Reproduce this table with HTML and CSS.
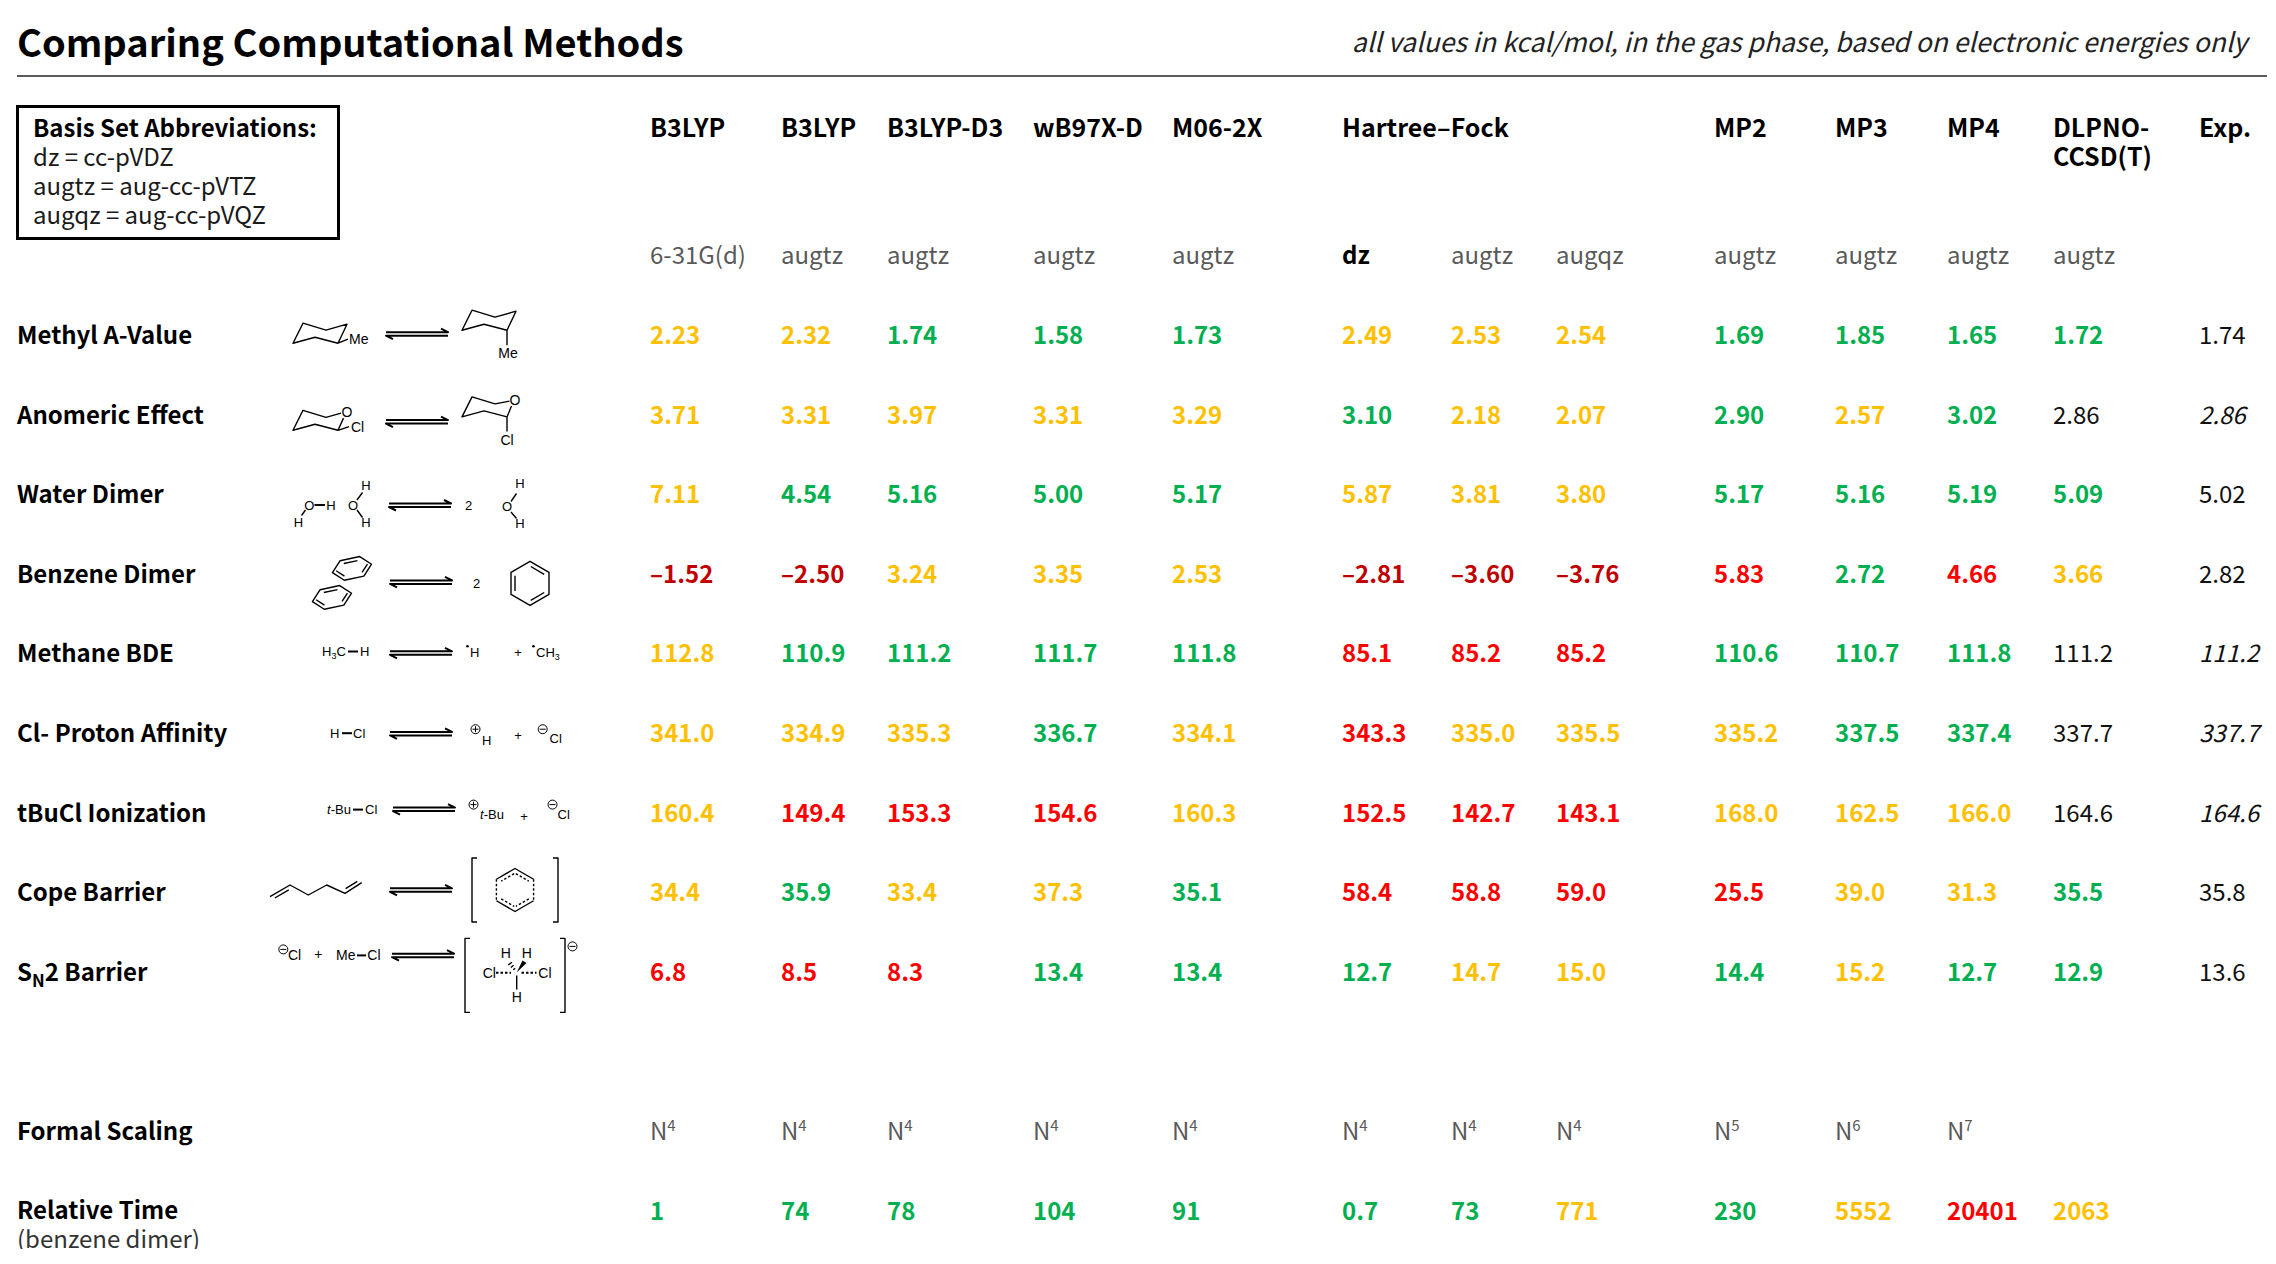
FILE: index.html
```html
<!DOCTYPE html>
<html lang="en">
<head>
<meta charset="utf-8">
<title>Comparing Computational Methods</title>
<link rel="stylesheet" href="styles.css">
</head>
<body>
<div class="page">
  <header class="top">
    <h1 class="title">Comparing Computational Methods</h1>
    <p class="note">all values in kcal/mol, in the gas phase, based on electronic energies only</p>
  </header>

  <div class="table">
    <div class="basis">
      <div class="basis-title">Basis Set Abbreviations:</div>
      <div>dz = cc-pVDZ</div>
      <div>augtz = aug-cc-pVTZ</div>
      <div>augqz = aug-cc-pVQZ</div>
    </div>

    <div class="h">B3LYP</div>
    <div class="h">B3LYP</div>
    <div class="h">B3LYP-D3</div>
    <div class="h">wB97X-D</div>
    <div class="h">M06-2X</div>
    <div class="h span3">Hartree–Fock</div>
    <div class="h">MP2</div>
    <div class="h">MP3</div>
    <div class="h">MP4</div>
    <div class="h">DLPNO-<br>CCSD(T)</div>
    <div class="h">Exp.</div>

    <div class="s">6-31G(d)</div>
    <div class="s">augtz</div>
    <div class="s">augtz</div>
    <div class="s">augtz</div>
    <div class="s">augtz</div>
    <div class="s sb">dz</div>
    <div class="s">augtz</div>
    <div class="s">augqz</div>
    <div class="s">augtz</div>
    <div class="s">augtz</div>
    <div class="s">augtz</div>
    <div class="s">augtz</div>
    <div class="s"></div>

    <!-- Methyl A-Value -->
    <div class="lbl">Methyl A-Value</div>
    <div class="mol"><svg viewBox="260 293.8 390 80" width="390" height="80">
      <path d="M293,343 L303,323 L326,330 L347,324 L338,343 L315,337 Z M338,343 L348,339"/>
      <text x="349" y="344">Me</text>
      <path class="eq" transform="translate(386,332)" d="M0,0 H62 L55,-3.5 M62,3.5 H0 L7,7"/>
      <path d="M462,330 L472,310 L495,317 L516,311 L507,330 L484,324 Z M507,330 V345"/>
      <text x="508" y="358" text-anchor="middle">Me</text>
    </svg></div>
    <div class="v a">2.23</div><div class="v a">2.32</div><div class="v g">1.74</div><div class="v g">1.58</div><div class="v g">1.73</div>
    <div class="v a">2.49</div><div class="v a">2.53</div><div class="v a">2.54</div>
    <div class="v g">1.69</div><div class="v g">1.85</div><div class="v g">1.65</div><div class="v g">1.72</div>
    <div class="v k">1.74</div>

    <!-- Anomeric Effect -->
    <div class="lbl">Anomeric Effect</div>
    <div class="mol"><svg viewBox="260 373.4 390 80" width="390" height="80">
      <path d="M341,413.5 L326,417.7 L303,410.7 L293,430.7 L315,424.7 L338,430.7 L343.5,418.5 M338,430.7 L349,427"/>
      <text x="347" y="417.5" text-anchor="middle">O</text>
      <text x="351" y="432">Cl</text>
      <path class="eq" transform="translate(386,420.5)" d="M0,0 H62 L55,-3.5 M62,3.5 H0 L7,7"/>
      <path d="M509.5,401.5 L495,404.3 L472,397.3 L462,417.3 L484,411.3 L507,417.3 L511.5,406.5 M507,417.3 V432"/>
      <text x="515" y="405.5" text-anchor="middle">O</text>
      <text x="507" y="445" text-anchor="middle">Cl</text>
    </svg></div>
    <div class="v a">3.71</div><div class="v a">3.31</div><div class="v a">3.97</div><div class="v a">3.31</div><div class="v a">3.29</div>
    <div class="v g">3.10</div><div class="v a">2.18</div><div class="v a">2.07</div>
    <div class="v g">2.90</div><div class="v a">2.57</div><div class="v g">3.02</div><div class="v k">2.86</div>
    <div class="v k ki">2.86</div>

    <!-- Water Dimer -->
    <div class="lbl">Water Dimer</div>
    <div class="mol"><svg viewBox="260 453 390 80" width="390" height="80">
      <text class="sm" x="309.3" y="509.7" text-anchor="middle">O</text>
      <path class="bd" d="M314.5,505 H325"/>
      <text class="sm" x="331" y="509.7" text-anchor="middle">H</text>
      <path d="M305.5,510 L301.5,515.5"/>
      <text class="sm" x="298.5" y="527.2" text-anchor="middle">H</text>
      <text class="sm" x="366" y="489.7" text-anchor="middle">H</text>
      <path d="M357,500 L362.5,492.5 M357,510 L362.5,517.5"/>
      <text class="sm" x="353" y="509.7" text-anchor="middle">O</text>
      <text class="sm" x="366" y="527.2" text-anchor="middle">H</text>
      <path class="eq" transform="translate(389,503.5)" d="M0,0 H62 L55,-3.5 M62,3.5 H0 L7,7"/>
      <text class="sm" x="468.6" y="509.7" text-anchor="middle">2</text>
      <text class="sm" x="520" y="487.7" text-anchor="middle">H</text>
      <path d="M511,501.5 L516.5,493.5 M511,512 L516.5,518.5"/>
      <text class="sm" x="507" y="511.4" text-anchor="middle">O</text>
      <text class="sm" x="520" y="527.7" text-anchor="middle">H</text>
    </svg></div>
    <div class="v a">7.11</div><div class="v g">4.54</div><div class="v g">5.16</div><div class="v g">5.00</div><div class="v g">5.17</div>
    <div class="v a">5.87</div><div class="v a">3.81</div><div class="v a">3.80</div>
    <div class="v g">5.17</div><div class="v g">5.16</div><div class="v g">5.19</div><div class="v g">5.09</div>
    <div class="v k">5.02</div>

    <!-- Benzene Dimer -->
    <div class="lbl">Benzene Dimer</div>
    <div class="mol"><svg viewBox="260 532.6 390 80" width="390" height="80">
      <g transform="translate(352,568) rotate(-12)">
        <path d="M20,0 L10,-10 L-10,-10 L-20,0 L-10,10 L10,10 Z M-7,-6.5 H7 M-16,-1 L-9,6 M16,-1 L9,6"/>
      </g>
      <g transform="translate(332,597) rotate(-12)">
        <path d="M20,0 L10,-10 L-10,-10 L-20,0 L-10,10 L10,10 Z M-7,-6.5 H7 M-16,-1 L-9,6 M16,-1 L9,6"/>
      </g>
      <path class="eq" transform="translate(390,580)" d="M0,0 H62 L55,-3.5 M62,3.5 H0 L7,7"/>
      <text class="sm" x="476.5" y="588" text-anchor="middle">2</text>
      <path d="M530,561 L549,572 L549,594 L530,605 L511,594 L511,572 Z M515,575.3 V590.7 M530.8,566.1 L544.2,573.9 M544.2,592.1 L530.8,599.9"/>
    </svg></div>
    <div class="v dr">–1.52</div><div class="v dr">–2.50</div><div class="v a">3.24</div><div class="v a">3.35</div><div class="v a">2.53</div>
    <div class="v dr">–2.81</div><div class="v dr">–3.60</div><div class="v dr">–3.76</div>
    <div class="v r">5.83</div><div class="v g">2.72</div><div class="v r">4.66</div><div class="v a">3.66</div>
    <div class="v k">2.82</div>

    <!-- Methane BDE -->
    <div class="lbl">Methane BDE</div>
    <div class="mol"><svg viewBox="260 612.2 390 80" width="390" height="80">
      <text class="sm" x="322" y="656.5">H<tspan class="sub" dy="3">3</tspan><tspan dy="-3">C</tspan></text>
      <path class="bd" d="M348,651.7 H358"/>
      <text class="sm" x="360" y="656.5">H</text>
      <path class="eq" transform="translate(390,651.5)" d="M0,0 H62 L55,-3.5 M62,3.5 H0 L7,7"/>
      <circle class="dot" cx="467.5" cy="646.5" r="1.3"/>
      <text class="sm" x="470" y="657.5">H</text>
      <text class="sm" x="518" y="657.5" text-anchor="middle">+</text>
      <circle class="dot" cx="533.5" cy="646.5" r="1.3"/>
      <text class="sm" x="536" y="657.5">CH<tspan class="sub" dy="3">3</tspan></text>
    </svg></div>
    <div class="v a">112.8</div><div class="v g">110.9</div><div class="v g">111.2</div><div class="v g">111.7</div><div class="v g">111.8</div>
    <div class="v r">85.1</div><div class="v r">85.2</div><div class="v r">85.2</div>
    <div class="v g">110.6</div><div class="v g">110.7</div><div class="v g">111.8</div><div class="v k">111.2</div>
    <div class="v k ki">111.2</div>

    <!-- Cl- Proton Affinity -->
    <div class="lbl">Cl- Proton Affinity</div>
    <div class="mol"><svg viewBox="260 691.8 390 80" width="390" height="80">
      <text class="sm" x="330" y="737.7">H</text>
      <path class="bd" d="M342,733 H352"/>
      <text class="sm" x="353" y="737.7">Cl</text>
      <path class="eq" transform="translate(390,731.7)" d="M0,0 H62 L55,-3.5 M62,3.5 H0 L7,7"/>
      <circle class="chg" cx="475.5" cy="729" r="4.5"/>
      <path class="thin" d="M472.5,729 H478.5 M475.5,726 V732"/>
      <text class="sm" x="482" y="744.7">H</text>
      <text class="sm" x="518" y="739.7" text-anchor="middle">+</text>
      <circle class="chg" cx="542.7" cy="729" r="4.5"/>
      <path class="thin" d="M539.7,729 H545.7"/>
      <text class="sm" x="549.6" y="742.7">Cl</text>
    </svg></div>
    <div class="v a">341.0</div><div class="v a">334.9</div><div class="v a">335.3</div><div class="v g">336.7</div><div class="v a">334.1</div>
    <div class="v r">343.3</div><div class="v a">335.0</div><div class="v a">335.5</div>
    <div class="v a">335.2</div><div class="v g">337.5</div><div class="v g">337.4</div><div class="v k">337.7</div>
    <div class="v k ki">337.7</div>

    <!-- tBuCl Ionization -->
    <div class="lbl">tBuCl Ionization</div>
    <div class="mol"><svg viewBox="260 771.4 390 80" width="390" height="80">
      <text class="sm" x="327" y="814.7"><tspan font-style="italic">t</tspan>-Bu</text>
      <path class="bd" d="M353,810 H363"/>
      <text class="sm" x="365" y="814.7">Cl</text>
      <path class="eq" transform="translate(393,808)" d="M0,0 H62 L55,-3.5 M62,3.5 H0 L7,7"/>
      <circle class="chg" cx="473.5" cy="805" r="4.5"/>
      <path class="thin" d="M470.5,805 H476.5 M473.5,802 V808"/>
      <text class="sm" x="480" y="819.5"><tspan font-style="italic">t</tspan>-Bu</text>
      <text class="sm" x="524" y="821" text-anchor="middle">+</text>
      <circle class="chg" cx="552.5" cy="805" r="4.5"/>
      <path class="thin" d="M549.5,805 H555.5"/>
      <text class="sm" x="557.5" y="819.5">Cl</text>
    </svg></div>
    <div class="v a">160.4</div><div class="v r">149.4</div><div class="v r">153.3</div><div class="v r">154.6</div><div class="v a">160.3</div>
    <div class="v r">152.5</div><div class="v r">142.7</div><div class="v r">143.1</div>
    <div class="v a">168.0</div><div class="v a">162.5</div><div class="v a">166.0</div><div class="v k">164.6</div>
    <div class="v k ki">164.6</div>

    <!-- Cope Barrier -->
    <div class="lbl">Cope Barrier</div>
    <div class="mol"><svg viewBox="260 851 390 80" width="390" height="80">
      <path d="M270,896.7 L290,885 L308.3,895 L326.7,885 L345,893.3 L361.7,882.7 M274.8,898 L288.8,889.8 M345.6,888.7 L357.3,881.3"/>
      <path class="eq" transform="translate(390,888.3)" d="M0,0 H62 L55,-3.5 M62,3.5 H0 L7,7"/>
      <path d="M477,858 H472 V922 H477 M553,858 H558 V922 H553"/>
      <path d="M496.4,879.25 L515,868.5 L533.6,879.25 M496.4,900.75 L515,911.5 L533.6,900.75"/>
      <path class="dash" d="M496.4,879.25 V900.75 M533.6,879.25 V900.75 M515.8,873.6 L528.8,881.1 M514.2,873.6 L501.2,881.1 M528.8,898.9 L515.8,906.4 M501.2,898.9 L514.2,906.4"/>
    </svg></div>
    <div class="v a">34.4</div><div class="v g">35.9</div><div class="v a">33.4</div><div class="v a">37.3</div><div class="v g">35.1</div>
    <div class="v r">58.4</div><div class="v r">58.8</div><div class="v r">59.0</div>
    <div class="v r">25.5</div><div class="v a">39.0</div><div class="v a">31.3</div><div class="v g">35.5</div>
    <div class="v k">35.8</div>

    <!-- SN2 Barrier -->
    <div class="lbl">S<span class="subn">N</span>2 Barrier</div>
    <div class="mol"><svg viewBox="260 930.6 390 80" width="390" height="80">
      <circle class="chg" cx="283.3" cy="949" r="4.5"/>
      <path class="thin" d="M280.3,949 H286.3"/>
      <text x="288" y="960">Cl</text>
      <text x="318.3" y="959" text-anchor="middle">+</text>
      <text x="336" y="960">Me</text>
      <path class="bd" d="M357,955 H366"/>
      <text x="367.3" y="960">Cl</text>
      <path class="eq" transform="translate(392,953.3)" d="M0,0 H62 L55,-3.5 M62,3.5 H0 L7,7"/>
      <path d="M470,938 H465 V1012 H470 M560,938 H565 V1012 H560"/>
      <circle class="chg" cx="572.5" cy="946" r="4.5"/>
      <path class="thin" d="M569.5,946 H575.5"/>
      <text x="505.8" y="958" text-anchor="middle">H</text>
      <text x="526.7" y="958" text-anchor="middle">H</text>
      <text x="482.7" y="977.3">Cl</text>
      <text x="538.3" y="977.3">Cl</text>
      <text x="516.7" y="1001.7" text-anchor="middle">H</text>
      <path class="dash bd" d="M496,972.3 H511 M521.5,972.3 H536.5"/>
      <path d="M516.7,975 V989 M513.2,969.4 L515.2,968 M510.8,967.1 L513.6,964.9 M508.2,964.6 L512,961.8"/>
      <polygon class="wedge" points="516.7,972 522.5,960 526.5,962.5"/>
    </svg></div>
    <div class="v r">6.8</div><div class="v r">8.5</div><div class="v r">8.3</div><div class="v g">13.4</div><div class="v g">13.4</div>
    <div class="v g">12.7</div><div class="v a">14.7</div><div class="v a">15.0</div>
    <div class="v g">14.4</div><div class="v a">15.2</div><div class="v g">12.7</div><div class="v g">12.9</div>
    <div class="v k">13.6</div>

    <div class="spacer"></div>

    <!-- Formal Scaling -->
    <div class="lbl">Formal Scaling</div>
    <div></div>
    <div class="n">N<span class="sup">4</span></div>
    <div class="n">N<span class="sup">4</span></div>
    <div class="n">N<span class="sup">4</span></div>
    <div class="n">N<span class="sup">4</span></div>
    <div class="n">N<span class="sup">4</span></div>
    <div class="n">N<span class="sup">4</span></div>
    <div class="n">N<span class="sup">4</span></div>
    <div class="n">N<span class="sup">4</span></div>
    <div class="n">N<span class="sup">5</span></div>
    <div class="n">N<span class="sup">6</span></div>
    <div class="n">N<span class="sup">7</span></div>
    <div></div>
    <div></div>

    <!-- Relative Time -->
    <div class="lbl rel">Relative Time<span class="rel-sub">(benzene dimer)</span></div>
    <div></div>
    <div class="v g">1</div><div class="v g">74</div><div class="v g">78</div><div class="v g">104</div><div class="v g">91</div>
    <div class="v g">0.7</div><div class="v g">73</div><div class="v a">771</div>
    <div class="v g">230</div><div class="v a">5552</div><div class="v r">20401</div><div class="v a">2063</div>
    <div></div>
  </div>
</div>
</body>
</html>
```

FILE: styles.css
```css
html, body {
  margin: 0;
  padding: 0;
  background: #ffffff;
}

body {
  font-family: "Noto Sans CJK JP", "Noto Sans", sans-serif;
  color: #000000;
}

.page {
  padding: 0 9px 0 17px;
}

/* ---------- top heading ---------- */
.top {
  display: flex;
  justify-content: space-between;
  align-items: center;
  height: 77px;
  box-sizing: border-box;
  padding: 12px 20px 6px 0;
  border-bottom: 2px solid #595959;
}

.title {
  margin: 0;
  font-size: 38px;
  font-weight: 700;
  line-height: 1.2;
}

.note {
  margin: 0;
  font-size: 26.5px;
  font-style: italic;
  color: #222222;
  line-height: 1.2;
}

/* ---------- the table ---------- */
.table {
  display: grid;
  grid-template-columns: 243px 390px 131px 106px 146px 139px 170px 109px 105px 158px 121px 112px 106px 146px 1fr;
  grid-template-rows: 109.2px repeat(13, 79.6px);
  margin-top: 28px;
  font-size: 24px;
  line-height: 29px;
  align-items: center;
}

.basis {
  grid-column: 1 / 3;
  grid-row: 1 / 3;
  align-self: start;
  justify-self: start;
  margin-left: -1px;
  width: 324px;
  box-sizing: border-box;
  border: 3px solid #000000;
  padding: 4px 14px 9px 14px;
  font-size: 24px;
  line-height: 29px;
  color: #1a1a1a;
  white-space: nowrap;
}

.basis-title {
  font-weight: 700;
  color: #000000;
}

.h {
  align-self: start;
  padding-top: 7px;
  font-size: 25px;
  font-weight: 700;
  white-space: nowrap;
}

.span3 {
  grid-column: span 3;
}

.s {
  color: #595959;
  white-space: nowrap;
}

.sb {
  color: #000000;
  font-weight: 700;
}

.lbl {
  font-weight: 700;
  white-space: nowrap;
}

.subn {
  font-size: 17px;
  vertical-align: -6px;
  line-height: 0;
}

.rel {
  align-self: start;
  padding-top: 25px;
}

.rel-sub {
  display: block;
  font-weight: 400;
  color: #333333;
}

.spacer {
  grid-column: 1 / -1;
}

.v {
  font-weight: 700;
  white-space: nowrap;
}

.a { color: #ffc000; }
.g { color: #00b050; }
.r { color: #ff0000; }
.dr { color: #c00000; }
.k { color: #111111; font-weight: 400; }
.ki { font-style: italic; }

.n {
  color: #595959;
}

.sup {
  font-size: 15px;
  vertical-align: 9px;
  line-height: 0;
}

/* ---------- structures ---------- */
.mol {
  align-self: stretch;
  height: 80px;
}

.mol svg {
  display: block;
  overflow: visible;
}

.mol path {
  fill: none;
  stroke: #000000;
  stroke-width: 1.4;
  stroke-linejoin: round;
  stroke-linecap: butt;
}

.mol path.eq {
  stroke-width: 2;
}

.mol path.bd {
  stroke-width: 2;
}

.mol path.thin {
  stroke-width: 1;
}

.mol path.dash {
  stroke-dasharray: 2.5 2;
}

.mol circle.chg {
  fill: none;
  stroke: #000000;
  stroke-width: 1;
}

.mol circle.dot {
  fill: #000000;
}

.mol polygon.wedge {
  fill: #000000;
}

.mol text {
  font-family: "Liberation Sans", Arial, sans-serif;
  font-size: 14px;
  fill: #000000;
}

.mol text.sm {
  font-size: 13px;
}

.mol tspan.sub {
  font-size: 9px;
}
```
